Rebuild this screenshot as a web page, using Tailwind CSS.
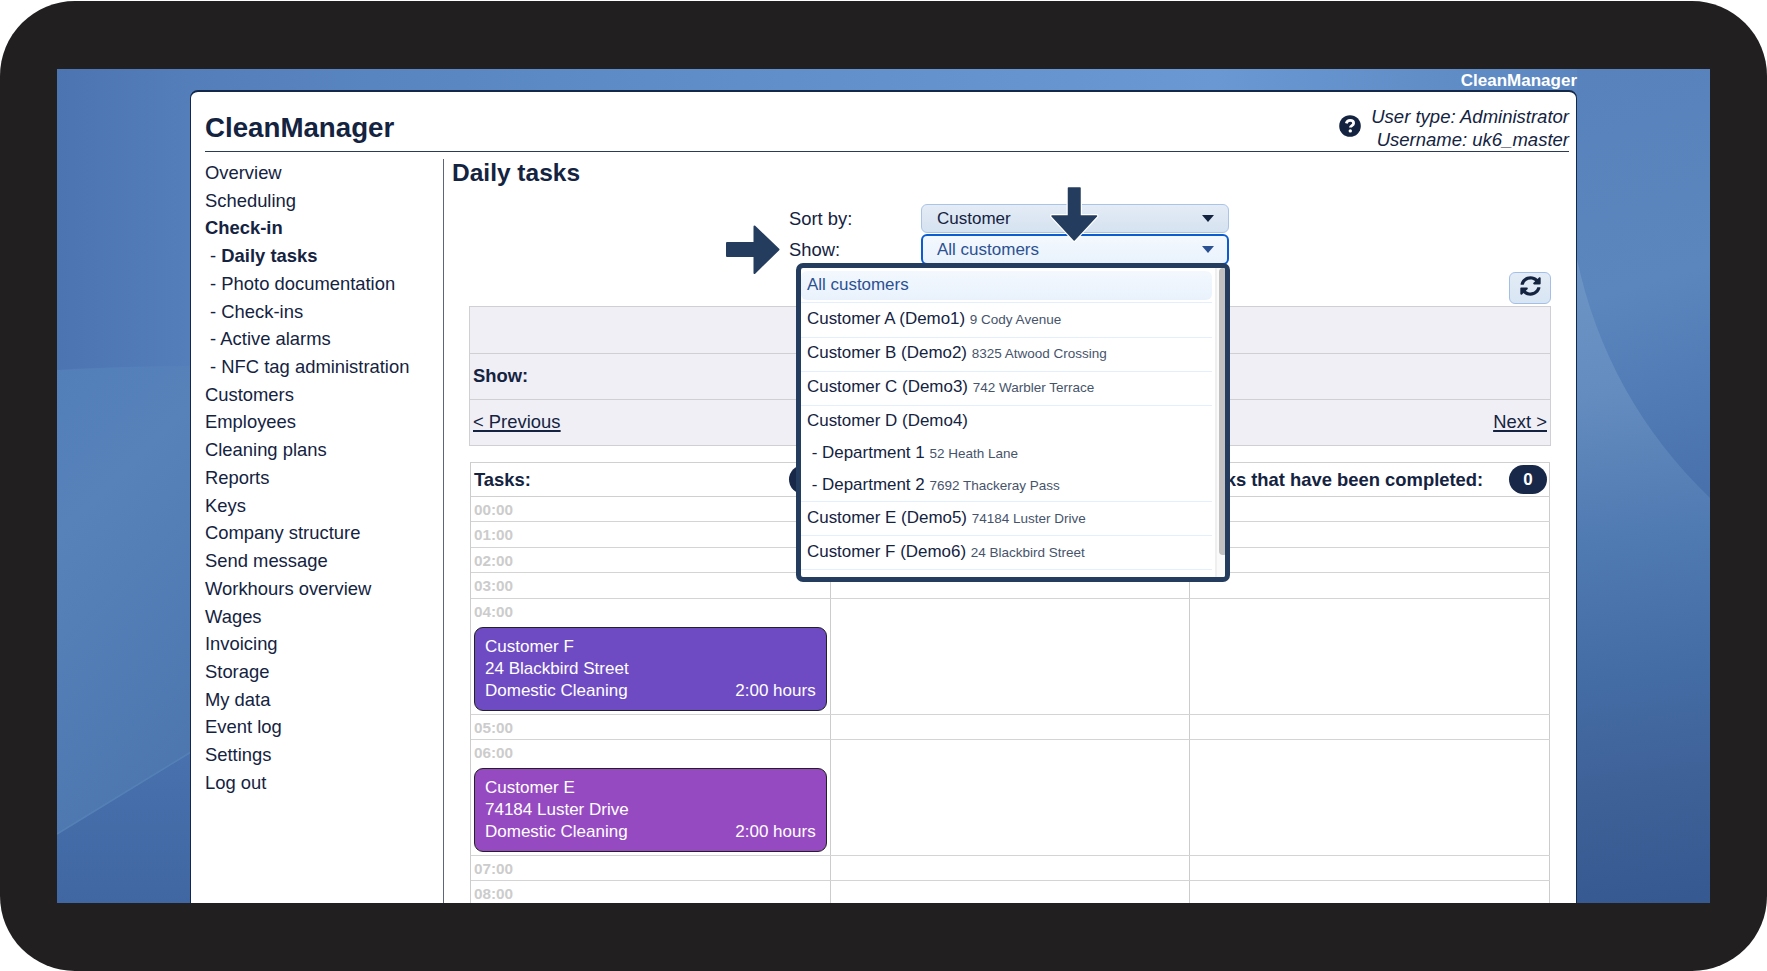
<!DOCTYPE html>
<html lang="en">
<head>
  <meta charset="UTF-8">
  <meta name="viewport" content="width=device-width, initial-scale=1.0">
  <title>CleanManager</title>
  <script src="https://cdn.jsdelivr.net/npm/@tailwindcss/browser@4"></script>
</head>
<body class="bg-white overflow-hidden font-['Liberation_Sans',Arial,sans-serif] text-[#14233f]">
  <div class="mt-px w-[1767px] h-[970px] rounded-[75px] bg-[#221f20] pt-[68px] pl-[57px]">
    <div class="relative w-[1653px] h-[834px] overflow-hidden">

      <!-- Wallpaper -->
      <svg class="absolute inset-0" width="1653" height="834" viewBox="0 0 1653 834">
        <defs>
          <linearGradient id="top" x1="0" x2="1" y1="0" y2="0">
            <stop offset="0" stop-color="#4b74b1"/>
            <stop offset=".08" stop-color="#547eba"/>
            <stop offset=".3" stop-color="#5c8ac5"/>
            <stop offset=".7" stop-color="#6998d2"/>
            <stop offset=".9" stop-color="#5d88c1"/>
            <stop offset="1" stop-color="#4f79b4"/>
          </linearGradient>
          <linearGradient id="left" x1="0" x2=".25" y1="0" y2="1">
            <stop offset="0" stop-color="#537fb9"/>
            <stop offset=".3" stop-color="#5681b9"/>
            <stop offset="1" stop-color="#4c75ae"/>
          </linearGradient>
          <linearGradient id="leftLow" x1="0" x2="0" y1="0" y2="1">
            <stop offset="0" stop-color="#4871ad"/>
            <stop offset="1" stop-color="#4067a2"/>
          </linearGradient>
          <linearGradient id="right" gradientUnits="userSpaceOnUse" x1="1520" y1="0" x2="1653" y2="430">
            <stop offset="0" stop-color="#5882bb"/>
            <stop offset=".5" stop-color="#5a85bd"/>
            <stop offset="1" stop-color="#4871ab"/>
          </linearGradient>
          <linearGradient id="rightLow" gradientUnits="userSpaceOnUse" x1="1520" y1="200" x2="1600" y2="834">
            <stop offset="0" stop-color="#6c95c5"/>
            <stop offset=".2" stop-color="#648cbf"/>
            <stop offset=".42" stop-color="#507ab2"/>
            <stop offset=".65" stop-color="#446ca4"/>
            <stop offset=".8" stop-color="#3f6299"/>
            <stop offset="1" stop-color="#355990"/>
          </linearGradient>
        </defs>
        <rect width="1653" height="834" fill="url(#top)"/>
        <path d="M0 301Q70 297 134 297V834H0Z" fill="url(#left)"/>
        <path d="M0 765L134 683V834H0Z" fill="url(#leftLow)"/>
        <path d="M0 765L134 683" stroke="#5580b6" stroke-width="1.5"/>
        <rect x="1520" width="133" height="834" fill="url(#right)"/>
        <path d="M1520 190Q1550 330 1653 429V834H1520Z" fill="url(#rightLow)"/>
      </svg>

      <div class="relative ml-[133px] w-[1387px]">
        <div class="h-[21px] text-right text-[17px] leading-[24px] font-bold text-white">CleanManager</div>

        <div class="h-[830px] rounded-t-[8px] border border-t-2 border-[#14284a] bg-white pl-[14px] pr-[7px]">
          <!-- Header -->
          <header class="flex h-[60px] justify-between border-b border-[#2b3a55]">
            <h1 class="pt-[20px] text-[27.7px] leading-[32px] font-bold">CleanManager</h1>
            <div class="flex items-start">
              <svg class="mt-[23px] mr-[10px]" width="22" height="22" viewBox="0 0 22 22">
                <circle cx="11" cy="11" r="10.8" fill="#14233f"/>
                <path d="M7.3 8.4C7.9 6.2 9.3 5.4 11.1 5.4c2.1 0 3.5 1.1 3.5 2.8 0 2.5-3.2 2.3-3.2 4.4" fill="none" stroke="#fff" stroke-width="2.8"/>
                <circle cx="11.3" cy="15.9" r="1.7" fill="#fff"/>
              </svg>
              <div class="pt-[13px] text-right text-[18.5px] leading-[23.3px] italic">User type: Administrator<br>Username: uk6_master</div>
            </div>
          </header>

          <div class="flex pt-[7px]">
            <!-- Menu -->
            <nav class="w-[239px] h-[760px] shrink-0 border-r border-[#5c6679] text-[18.4px] leading-[27.72px]">
              <div>Overview</div>
              <div>Scheduling</div>
              <div class="font-bold">Check-in</div>
              <div>&nbsp;- <b>Daily tasks</b></div>
              <div>&nbsp;- Photo documentation</div>
              <div>&nbsp;- Check-ins</div>
              <div>&nbsp;- Active alarms</div>
              <div>&nbsp;- NFC tag administration</div>
              <div>Customers</div>
              <div>Employees</div>
              <div>Cleaning plans</div>
              <div>Reports</div>
              <div>Keys</div>
              <div>Company structure</div>
              <div>Send message</div>
              <div>Workhours overview</div>
              <div>Wages</div>
              <div>Invoicing</div>
              <div>Storage</div>
              <div>My data</div>
              <div>Event log</div>
              <div>Settings</div>
              <div>Log out</div>
            </nav>

            <main class="relative flex-1 pl-[8px]">
              <h2 class="h-[45px] text-[24.5px] leading-[27px] font-bold">Daily tasks</h2>

              <!-- Filters -->
              <div class="ml-[337px] w-[440px]">
                <div class="flex h-[30px] items-start text-[18.4px]">
                  <label class="w-[132px] leading-[29px]">Sort by:</label>
                  <div class="flex h-[29px] w-[308px] items-center justify-between rounded-[6px] border border-[#a9c4e8] bg-linear-to-b from-[#e4ecf6] to-[#d5e2f0] pr-[14px] pl-[15px] text-[17px]">
                    Customer
                    <svg width="12" height="7" viewBox="0 0 12 7"><path d="M0 0h12L6 7Z" fill="#14233f"/></svg>
                  </div>
                </div>
                <div class="flex h-[31px] items-start text-[18.4px]">
                  <label class="w-[132px] leading-[31px]">Show:</label>
                  <div class="flex h-[31px] w-[308px] items-center justify-between rounded-[6px] border-2 border-[#0a5ccf] bg-linear-to-b from-[#f4f8fe] to-[#e9f2fc] pr-[13px] pl-[14px] text-[17px] text-[#2b5192]">
                    All customers
                    <svg width="12" height="7" viewBox="0 0 12 7"><path d="M0 0h12L6 7Z" fill="#2b5192"/></svg>
                  </div>
                </div>
              </div>

              <!-- Refresh -->
              <div class="mt-[7px] ml-[1057px] flex h-[32px] w-[42px] justify-center rounded-[6px] border border-[#a3bfe8] bg-linear-to-b from-[#e3ecf6] to-[#d8e5f3] pt-[3px]">
                <svg width="21" height="20" viewBox="0 0 512 512" preserveAspectRatio="none" fill="#14233f">
                  <path d="M370.7 133.3C339.5 104 298.9 88 255.8 88c-77.5.1-144.3 53.2-162.8 126.9-1.3 5.4-6.1 9.1-11.7 9.1H24.1c-7.5 0-13.2-6.8-11.8-14.2C33.9 94.9 134.8 8 256 8c66.4 0 126.8 26.1 171.3 68.7L463 41c15.1-15.1 41-4.4 41 17v134c0 13.3-10.7 24-24 24H346c-21.4 0-32.1-25.9-17-41l41.7-41.7zM32 296h134c21.4 0 32.1 25.9 17 41l-41.8 41.8c31.3 29.3 71.8 45.3 114.9 45.3 77.4-.1 144.3-53.1 162.8-126.8 1.3-5.4 6.1-9.1 11.7-9.1h57.3c7.5 0 13.2 6.8 11.8 14.2C478.1 417.1 377.2 504 256 504c-66.4 0-126.8-26.1-171.3-68.7L49 471c-15.1 15.1-41 4.4-41-17V320c0-13.3 10.7-24 24-24z"/>
                </svg>
              </div>

              <!-- Period bar -->
              <div class="mt-[2px] ml-[17px] w-[1082px] border border-[#d0d0d2] bg-[#f0eff6] text-[18.4px]">
                <div class="h-[46.5px] border-b border-[#d0d0d2]"></div>
                <div class="flex h-[46px] items-center border-b border-[#d0d0d2] pl-[3px] font-bold">Show:</div>
                <div class="flex h-[45.5px] items-center justify-between px-[3px] underline decoration-[1.5px] underline-offset-[2px]"><a>&lt; Previous</a><a>Next &gt;</a></div>
              </div>

              <!-- Task table -->
              <div class="mt-[15.5px] ml-[18px] w-[1080px] border-l border-[#ccc] text-[15.3px] leading-[17px] font-bold text-[#ccc]">
                <div class="grid h-[35px] grid-cols-3 border-y border-[#d0d0d0] text-[18.4px] text-[#14233f]">
                  <div class="flex items-center justify-between border-r border-[#ccc] px-[3px]">Tasks:<span class="flex h-[29px] w-[38px] items-center justify-center rounded-full bg-[#172848] text-[17px] text-white">2</span></div>
                  <div class="border-r border-[#ccc]"></div>
                  <div class="flex items-center justify-between border-r border-[#ccc] pr-[2px] pl-[5px]">Tasks that have been completed:<span class="flex h-[29px] w-[38px] items-center justify-center rounded-full bg-[#172848] text-[17px] text-white">0</span></div>
                </div>
                <div class="grid h-[25.5px] grid-cols-3 border-b border-[#d4d4d4]"><div class="border-r border-[#ccc] pt-[4px] pl-[3px]">00:00</div><div class="border-r border-[#ccc]"></div><div class="border-r border-[#ccc]"></div></div>
                <div class="grid h-[25.5px] grid-cols-3 border-b border-[#d4d4d4]"><div class="border-r border-[#ccc] pt-[4px] pl-[3px]">01:00</div><div class="border-r border-[#ccc]"></div><div class="border-r border-[#ccc]"></div></div>
                <div class="grid h-[25.5px] grid-cols-3 border-b border-[#d4d4d4]"><div class="border-r border-[#ccc] pt-[4px] pl-[3px]">02:00</div><div class="border-r border-[#ccc]"></div><div class="border-r border-[#ccc]"></div></div>
                <div class="grid h-[25.5px] grid-cols-3 border-b border-[#d4d4d4]"><div class="border-r border-[#ccc] pt-[4px] pl-[3px]">03:00</div><div class="border-r border-[#ccc]"></div><div class="border-r border-[#ccc]"></div></div>
                <div class="grid h-[116px] grid-cols-3 border-b border-[#d4d4d4]">
                  <div class="border-r border-[#ccc] pt-[4px] px-[3px]">04:00
                    <div class="mt-[7px] h-[84px] rounded-[9px] border border-[#222] bg-[#6e4bc3] px-[10px] pt-[8px] text-[17px] leading-[22.2px] font-normal text-white">
                      <div>Customer F</div>
                      <div>24 Blackbird Street</div>
                      <div class="flex justify-between"><span>Domestic Cleaning</span><span>2:00 hours</span></div>
                    </div>
                  </div>
                  <div class="border-r border-[#ccc]"></div><div class="border-r border-[#ccc]"></div>
                </div>
                <div class="grid h-[25.5px] grid-cols-3 border-b border-[#d4d4d4]"><div class="border-r border-[#ccc] pt-[4px] pl-[3px]">05:00</div><div class="border-r border-[#ccc]"></div><div class="border-r border-[#ccc]"></div></div>
                <div class="grid h-[115.5px] grid-cols-3 border-b border-[#d4d4d4]">
                  <div class="border-r border-[#ccc] pt-[4px] px-[3px]">06:00
                    <div class="mt-[7px] h-[84px] rounded-[9px] border border-[#222] bg-[#964ac1] px-[10px] pt-[8px] text-[17px] leading-[22.2px] font-normal text-white">
                      <div>Customer E</div>
                      <div>74184 Luster Drive</div>
                      <div class="flex justify-between"><span>Domestic Cleaning</span><span>2:00 hours</span></div>
                    </div>
                  </div>
                  <div class="border-r border-[#ccc]"></div><div class="border-r border-[#ccc]"></div>
                </div>
                <div class="grid h-[25.5px] grid-cols-3 border-b border-[#d4d4d4]"><div class="border-r border-[#ccc] pt-[4px] pl-[3px]">07:00</div><div class="border-r border-[#ccc]"></div><div class="border-r border-[#ccc]"></div></div>
                <div class="grid h-[25.5px] grid-cols-3 border-b border-[#d4d4d4]"><div class="border-r border-[#ccc] pt-[4px] pl-[3px]">08:00</div><div class="border-r border-[#ccc]"></div><div class="border-r border-[#ccc]"></div></div>
              </div>

              <!-- Open customer list -->
              <div class="absolute top-[104px] left-[352px] flex h-[319px] w-[434px] overflow-hidden rounded-[7px] border-[5px] border-[#243d5f] bg-white text-[16.95px]">
                <div class="w-[411px] pt-[3px]">
                  <div class="h-[32px] border-b border-[#e3effc]"><div class="h-[29px] rounded-[6px] bg-linear-to-b from-[#f3f8fe] to-[#e9f2fc] pl-[6px] leading-[28px] text-[#2b5192]">All customers</div></div>
                  <div class="h-[35px] border-b border-[#e3effc] pl-[6px] leading-[32px]">Customer A (Demo1) <span class="text-[13.5px] text-[#46546b]">9 Cody Avenue</span></div>
                  <div class="h-[34px] border-b border-[#e3effc] pl-[6px] leading-[30px]">Customer B (Demo2) <span class="text-[13.5px] text-[#46546b]">8325 Atwood Crossing</span></div>
                  <div class="h-[34px] border-b border-[#e3effc] pl-[6px] leading-[30px]">Customer C (Demo3) <span class="text-[13.5px] text-[#46546b]">742 Warbler Terrace</span></div>
                  <div class="h-[97px] border-b border-[#e3effc] pl-[6px] leading-[31.7px]">
                    <div class="-mt-px">Customer D (Demo4)</div>
                    <div>&nbsp;- Department 1 <span class="text-[13.5px] text-[#46546b]">52 Heath Lane</span></div>
                    <div>&nbsp;- Department 2 <span class="text-[13.5px] text-[#46546b]">7692 Thackeray Pass</span></div>
                  </div>
                  <div class="h-[34px] border-b border-[#e3effc] pl-[6px] leading-[32px]">Customer E (Demo5) <span class="text-[13.5px] text-[#46546b]">74184 Luster Drive</span></div>
                  <div class="h-[34px] border-b border-[#e3effc] pl-[6px] leading-[32px]">Customer F (Demo6) <span class="text-[13.5px] text-[#46546b]">24 Blackbird Street</span></div>
                </div>
                <div class="ml-[3px] w-[10px] border-l-2 border-[#efefef] bg-[#fafafa] pl-[2px]">
                  <div class="h-[287px] w-[8px] rounded-[4px] bg-[#c1c1c1]"></div>
                </div>
              </div>

              <!-- Pointer arrows -->
              <svg class="absolute top-[66px] left-[281px]" width="56" height="50" viewBox="0 0 56 50">
                <path d="M2 18.5H29.5V2L53.5 25 29.5 48.5V31.5H2Z" transform="translate(0 -.5)" fill="#243d5f" stroke="#243d5f" stroke-width="2" stroke-linejoin="round"/>
              </svg>
              <svg class="absolute top-[25px] left-[604px]" width="52" height="60" viewBox="0 0 52 60">
                <path d="M20.5 4H32V32H48.5L26.2 56 4 32H20.5Z" fill="#fff" stroke="#fff" stroke-width="4" stroke-linejoin="round"/>
                <path d="M20.5 4H32V32H48.5L26.2 56 4 32H20.5Z" fill="#243d5f" stroke="#243d5f" stroke-width="1.5" stroke-linejoin="round"/>
              </svg>
            </main>
          </div>
        </div>
      </div>
    </div>
  </div>
</body>
</html>
